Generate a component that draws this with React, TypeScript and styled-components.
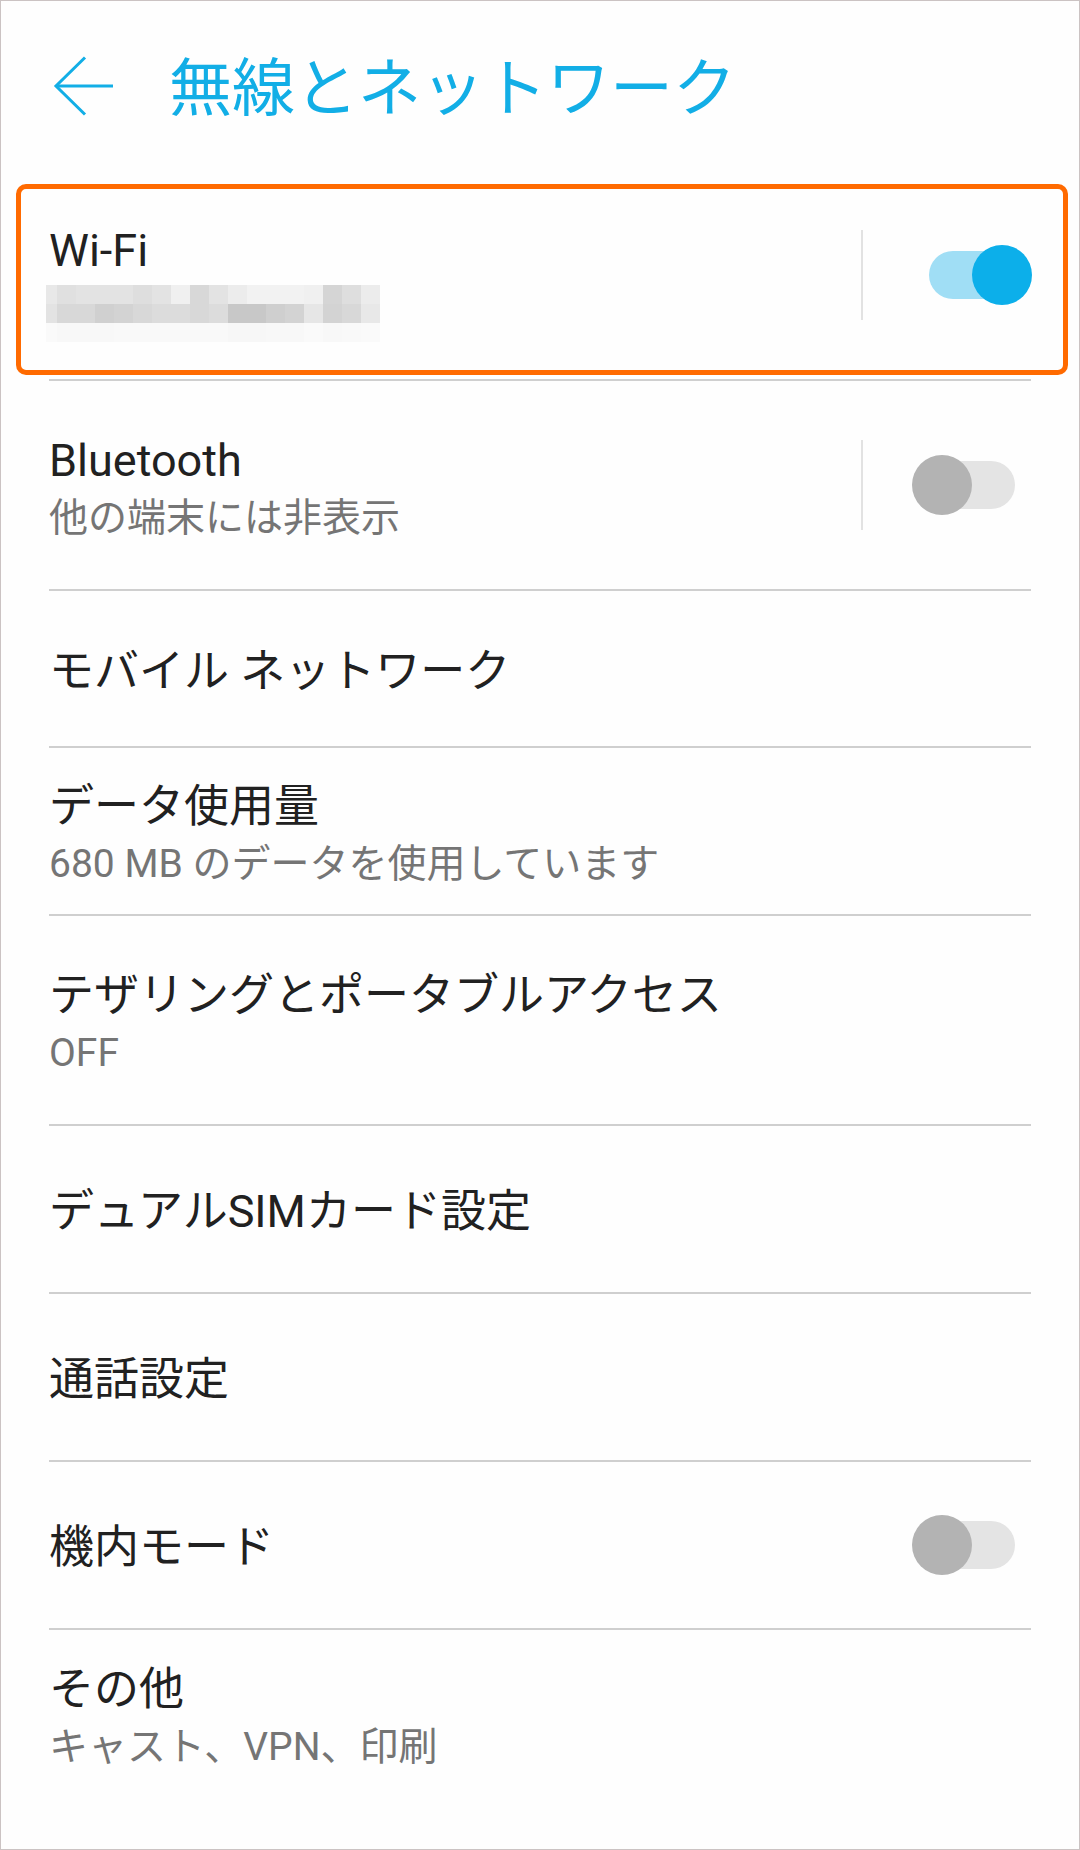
import React from "react";
import styled, { createGlobalStyle } from "styled-components";

const GlobalStyle = createGlobalStyle`
  html, body {
    margin: 0;
    padding: 0;
    background: #ffffff;
  }
  body {
    font-family: Roboto, "Noto Sans CJK JP", sans-serif;
  }
`;

const Frame = styled.div`
  width: 1080px;
  height: 1850px;
  box-sizing: border-box;
  border: 1px solid #cbc3c3;
  background: #fefefe;
  overflow: hidden;
  display: flex;
  flex-direction: column;
`;

const Header = styled.header`
  height: 170px;
  flex: none;
  display: flex;
  align-items: center;
  padding-left: 52px;
`;

const BackIcon = styled.svg`
  width: 60px;
  height: 60px;
  flex: none;
  display: block;
  margin-right: 56px;
`;

const Title = styled.h1`
  margin: 0 0 6px 0;
  font-family: "Noto Sans CJK JP", sans-serif;
  font-weight: 400;
  font-size: 63px;
  line-height: 72px;
  color: #12aee6;
  white-space: nowrap;
`;

const List = styled.div`
  display: flex;
  flex-direction: column;
`;

const Row = styled.div<{ $h: number; $last?: boolean }>`
  position: relative;
  flex: none;
  height: ${(p) => p.$h}px;
  box-sizing: border-box;
  margin: 0 48px;
  display: flex;
  align-items: center;
  border-bottom: ${(p) => (p.$last ? "none" : "2px solid #cfcfcf")};
`;

const TextBlock = styled.div`
  flex: 1;
  min-width: 0;
  display: flex;
  flex-direction: column;
  gap: 4px;
  margin-top: 6px;
`;

const Label = styled.div`
  font-size: 45px;
  line-height: 56px;
  color: #212121;
  white-space: nowrap;
`;

const Summary = styled.div`
  font-size: 39px;
  line-height: 50px;
  color: #757575;
  white-space: nowrap;
`;

const MosaicBox = styled.div`
  height: 50px;
`;

const Mosaic = styled.svg`
  display: block;
  margin: 2px 0 0 -3px;
`;

const Separator = styled.div`
  width: 2px;
  height: 90px;
  flex: none;
  background: #e2e2e2;
  margin-right: 49px;
`;

const Switch = styled.div`
  position: relative;
  width: 120px;
  height: 60px;
  flex: none;
  margin-right: -1px;
`;

const Track = styled.div<{ $on: boolean }>`
  position: absolute;
  left: 17px;
  top: 6px;
  width: 86px;
  height: 48px;
  border-radius: 24px;
  background: ${(p) => (p.$on ? "#a0def5" : "#e4e4e4")};
`;

const Thumb = styled.div<{ $on: boolean }>`
  position: absolute;
  top: 0;
  left: ${(p) => (p.$on ? 60 : 0)}px;
  width: 60px;
  height: 60px;
  border-radius: 50%;
  background: ${(p) => (p.$on ? "#0cafea" : "#b3b3b3")};
`;

const Highlight = styled.div`
  position: absolute;
  left: -33px;
  top: 13px;
  width: 1052px;
  height: 191px;
  box-sizing: border-box;
  border: 5px solid #ff6a00;
  border-radius: 10px;
  pointer-events: none;
`;

const ToggleSwitch: React.FC<{ on: boolean }> = ({ on }) => (
  <Switch>
    <Track $on={on} />
    <Thumb $on={on} />
  </Switch>
);

const mosaicRows: string[][] = [
  ["e8", "e0", "e3", "e3", "e3", "de", "e3", "f0", "d8", "e3", "ec", "f2", "f2", "f2", "f0", "d5", "de", "ec"],
  ["e3", "d8", "d8", "d0", "d3", "d8", "dc", "dc", "d8", "dc", "c8", "c8", "cf", "d3", "e6", "d3", "d8", "e8"],
  ["fa", "f8", "f8", "f8", "f9", "f9", "f9", "f9", "f9", "f9", "f7", "f7", "f8", "f8", "fa", "f8", "f9", "fa"],
];

const BlurredSsid: React.FC = () => (
  <MosaicBox>
    <Mosaic width={334} height={57} viewBox="0 0 334 57">
      {mosaicRows.map((row, r) =>
        row.map((g, c) => {
          const x = c === 0 ? 0 : 11 + (c - 1) * 19;
          const w = c === 0 ? 11 : 19;
          return <rect key={`${r}-${c}`} x={x} y={r * 19} width={w} height={19} fill={`#${g}${g}${g}`} />;
        })
      )}
    </Mosaic>
  </MosaicBox>
);

export default function App() {
  return (
    <>
      <GlobalStyle />
      <Frame>
        <Header>
          <BackIcon viewBox="0 0 60 60" fill="none" stroke="#12aee6" strokeWidth={3} strokeLinecap="butt">
            <path d="M32 1.5 L3 30 L32 58.5" />
            <path d="M3 30 H60" />
          </BackIcon>
          <Title>無線とネットワーク</Title>
        </Header>
        <List>
          <Row $h={210}>
            <TextBlock>
              <Label>Wi-Fi</Label>
              <BlurredSsid />
            </TextBlock>
            <Separator />
            <ToggleSwitch on />
            <Highlight />
          </Row>
          <Row $h={210}>
            <TextBlock>
              <Label>Bluetooth</Label>
              <Summary>他の端末には非表示</Summary>
            </TextBlock>
            <Separator />
            <ToggleSwitch on={false} />
          </Row>
          <Row $h={157}>
            <TextBlock>
              <Label>モバイル ネットワーク</Label>
            </TextBlock>
          </Row>
          <Row $h={168}>
            <TextBlock>
              <Label>データ使用量</Label>
              <Summary>680 MB のデータを使用しています</Summary>
            </TextBlock>
          </Row>
          <Row $h={210}>
            <TextBlock>
              <Label>テザリングとポータブルアクセス</Label>
              <Summary>OFF</Summary>
            </TextBlock>
          </Row>
          <Row $h={168}>
            <TextBlock>
              <Label>デュアルSIMカード設定</Label>
            </TextBlock>
          </Row>
          <Row $h={168}>
            <TextBlock>
              <Label>通話設定</Label>
            </TextBlock>
          </Row>
          <Row $h={168}>
            <TextBlock>
              <Label>機内モード</Label>
            </TextBlock>
            <ToggleSwitch on={false} />
          </Row>
          <Row $h={168} $last>
            <TextBlock>
              <Label>その他</Label>
              <Summary>キャスト、VPN、印刷</Summary>
            </TextBlock>
          </Row>
        </List>
      </Frame>
    </>
  );
}
